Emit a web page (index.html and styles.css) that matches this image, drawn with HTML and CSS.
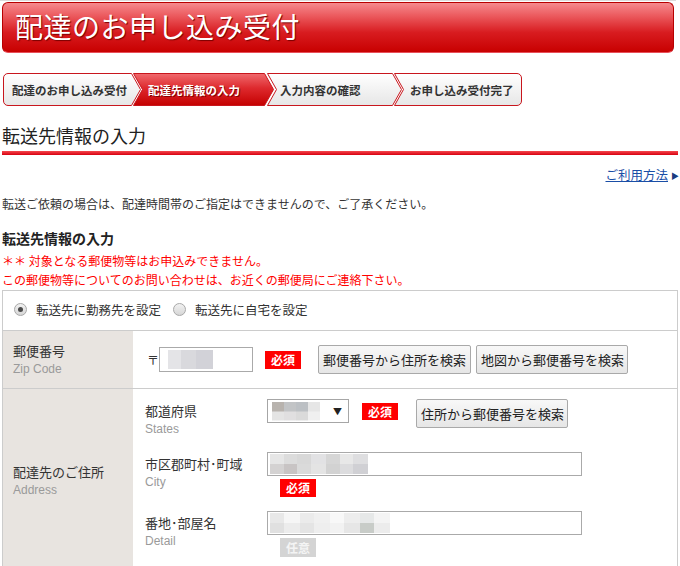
FILE: index.html
```html
<!DOCTYPE html>
<html lang="ja">
<head>
<meta charset="utf-8">
<title>配達のお申し込み受付</title>
<link rel="stylesheet" href="styles.css">
</head>
<body>
<div class="topline"></div>
<header class="hdr"><h1>配達のお申し込み受付</h1></header>

<ol class="steps">
  <li class="step s1">
    <svg width="138" height="33" viewBox="0 0 138 33"><defs><linearGradient id="gw1" x1="0" y1="0" x2="0" y2="1"><stop offset="0" stop-color="#ffffff"/><stop offset="1" stop-color="#e6e6e6"/></linearGradient></defs><path d="M5 .5H128.5L137.5 16.5L128.5 32.5H5A4.5 4.5 0 0 1 .5 28V5A4.5 4.5 0 0 1 5 .5Z" fill="url(#gw1)" stroke="#c8161d"/></svg>
    <span>配達のお申し込み受付</span>
  </li>
  <li class="step s2 active">
    <svg width="141" height="33" viewBox="0 0 141 33"><defs><linearGradient id="gr2" x1="0" y1="0" x2="0" y2="1"><stop offset="0" stop-color="#f06a6e"/><stop offset=".45" stop-color="#de2a2e"/><stop offset="1" stop-color="#c40000"/></linearGradient></defs><path d="M.5 .5H131.5L140.5 16.5L131.5 32.5H.5L9.5 16.5Z" fill="url(#gr2)" stroke="#c8161d"/></svg>
    <span>配達先情報の入力</span>
  </li>
  <li class="step s3">
    <svg width="135" height="33" viewBox="0 0 135 33"><defs><linearGradient id="gw3" x1="0" y1="0" x2="0" y2="1"><stop offset="0" stop-color="#ffffff"/><stop offset="1" stop-color="#e6e6e6"/></linearGradient></defs><path d="M.5 .5H125.5L134.5 16.5L125.5 32.5H.5L9.5 16.5Z" fill="url(#gw3)" stroke="#c8161d"/></svg>
    <span>入力内容の確認</span>
  </li>
  <li class="step s4">
    <svg width="128" height="33" viewBox="0 0 128 33"><defs><linearGradient id="gw4" x1="0" y1="0" x2="0" y2="1"><stop offset="0" stop-color="#ffffff"/><stop offset="1" stop-color="#e6e6e6"/></linearGradient></defs><path d="M.5 .5H123A4.5 4.5 0 0 1 127.5 5V28A4.5 4.5 0 0 1 123 32.5H.5L9.5 16.5Z" fill="url(#gw4)" stroke="#c8161d"/></svg>
    <span>お申し込み受付完了</span>
  </li>
</ol>

<h2 class="sec-title">転送先情報の入力</h2>
<div class="redline"></div>

<p class="help"><a href="#">ご利用方法</a><span class="tri">▶</span></p>

<p class="note">転送ご依頼の場合は、配達時間帯のご指定はできませんので、ご了承ください。</p>

<h3 class="sub-title">転送先情報の入力</h3>
<p class="warn">＊＊ 対象となる郵便物等はお申込みできません。<br>この郵便物等についてのお問い合わせは、お近くの郵便局にご連絡下さい。</p>

<div class="form">
  <div class="radios">
    <label class="opt"><span class="radio on"></span>転送先に勤務先を設定</label>
    <label class="opt"><span class="radio"></span>転送先に自宅を設定</label>
  </div>

  <div class="row">
    <div class="lbl"><div class="jp">郵便番号</div><div class="en">Zip Code</div></div>
    <div class="val zipval">
      <span class="postmark">〒</span>
      <span class="input zip"><span class="mosaic m-zip"></span></span>
      <span class="badge req">必須</span>
      <button class="btn b1" type="button">郵便番号から住所を検索</button>
      <button class="btn b2" type="button">地図から郵便番号を検索</button>
    </div>
  </div>

  <div class="row">
    <div class="lbl"><div class="jp">配達先のご住所</div><div class="en">Address</div></div>
    <div class="val subs">
      <div class="subrow">
        <div class="slbl"><div class="jp">都道府県</div><div class="en">States</div></div>
        <div class="field inline">
          <span class="select"><span class="mosaic m-sel"></span><span class="arrow">▼</span></span>
          <span class="badge req b-sel">必須</span>
          <button class="btn b3" type="button">住所から郵便番号を検索</button>
        </div>
      </div>
      <div class="subrow">
        <div class="slbl"><div class="jp">市区郡町村･町域</div><div class="en">City</div></div>
        <div class="field">
          <span class="input wide"><span class="mosaic m-city"></span></span>
          <span class="badge req under">必須</span>
        </div>
      </div>
      <div class="subrow">
        <div class="slbl"><div class="jp">番地･部屋名</div><div class="en">Detail</div></div>
        <div class="field">
          <span class="input wide"><span class="mosaic m-det"></span></span>
          <span class="badge opt-b under">任意</span>
        </div>
      </div>
    </div>
  </div>
</div>
</body>
</html>
```

FILE: styles.css
```css
* { box-sizing: border-box; }

body {
  margin: 0;
  width: 680px;
  background: #fff;
  color: #333;
  font-family: "Noto Sans CJK JP", sans-serif;
}

.topline {
  height: 1px;
  width: 676px;
  background: #dcdcdc;
}

.hdr {
  margin: 1px 0 0 2px;
  width: 672px;
  height: 51px;
  border: 1px solid #b80000;
  border-bottom-color: #e8505a;
  border-radius: 6px;
  background: linear-gradient(#f58a8e 0%, #ec5c60 25%, #d81c20 60%, #c80000 100%);
  display: flex;
  align-items: center;
  padding: 0 0 3px 12px;
}

.hdr h1 {
  margin: 0;
  font-size: 28px;
  font-weight: normal;
  line-height: 1;
  letter-spacing: 0.5px;
  color: #fff;
  text-shadow: 1px 1px 1px #7a0000;
}

.steps {
  list-style: none;
  margin: 20px 0 0;
  padding: 0;
  display: flex;
  height: 33px;
}

.step {
  position: relative;
  height: 33px;
  display: flex;
  align-items: center;
  font-size: 11.5px;
  font-weight: bold;
  color: #333;
  white-space: nowrap;
}

.step svg {
  position: absolute;
  left: 0;
  top: 0;
}

.step span { position: relative; }

.s1 { width: 138px; margin-left: 3px; padding-left: 9px; }
.s2 { width: 141px; margin-left: -8px; padding-left: 15px; }
.s3 { width: 135px; margin-left: -7px; padding-left: 13px; }
.s4 { width: 128px; margin-left: -8px; padding-left: 16px; }

.step.active {
  color: #fff;
  text-shadow: 1px 1px 0 #8a0000;
}

.sec-title {
  margin: 17px 0 4px 2px;
  font-size: 18px;
  line-height: 24px;
  font-weight: normal;
  color: #222;
}

.redline {
  margin-left: 2px;
  width: 676px;
  height: 4px;
  background: linear-gradient(#f4484e, #d80010);
}

.help {
  margin: 11px 1px 0 0;
  text-align: right;
  font-size: 12.5px;
  line-height: 18px;
}

.help a {
  color: #1a4ea6;
  text-decoration: underline;
}

.help .tri {
  margin-left: 3px;
  font-size: 8px;
  color: #1a3c80;
  vertical-align: 1px;
}

.note {
  margin: 10px 0 0 2px;
  font-size: 12px;
  line-height: 18px;
  color: #333;
}

.sub-title {
  margin: 15px 0 0 2px;
  font-size: 14px;
  line-height: 20px;
  font-weight: bold;
  color: #222;
}

.warn {
  margin: 3px 0 0 2px;
  font-size: 12px;
  line-height: 19px;
  color: #ff0000;
}

.form {
  margin: 1px 0 0 2px;
  width: 676px;
  border: 1px solid #cccccc;
  border-bottom: none;
}

.radios {
  height: 40px;
  border-bottom: 1px solid #cccccc;
  display: flex;
  align-items: center;
  padding: 0 0 2px 11px;
  font-size: 12.5px;
}

.opt {
  display: flex;
  align-items: center;
  gap: 9px;
  margin-right: 12px;
  color: #333;
}

.radio {
  width: 13px;
  height: 13px;
  border-radius: 50%;
  border: 1px solid #a8a8a8;
  background: linear-gradient(#f2f2f2, #d6d6d6);
  display: inline-flex;
  align-items: center;
  justify-content: center;
}

.radio.on::after {
  content: "";
  width: 5px;
  height: 5px;
  border-radius: 50%;
  background: #4a4a4a;
}

.row {
  display: flex;
  border-bottom: 1px solid #cccccc;
}

.lbl {
  width: 130px;
  flex: none;
  background: #e8e4e0;
  padding-left: 10px;
  display: flex;
  flex-direction: column;
  justify-content: center;
}

.jp {
  font-size: 13px;
  line-height: 20px;
  color: #333;
  white-space: nowrap;
}

.en {
  font-family: "Liberation Sans", Arial, sans-serif;
  font-size: 12px;
  line-height: 17px;
  color: #9a9a9a;
}

.val {
  flex: 1;
}

.zipval {
  min-height: 57px;
  display: flex;
  align-items: center;
  padding-left: 14px;
}

.postmark {
  width: 12px;
  font-size: 12px;
  color: #333;
}

.input {
  display: flex;
  align-items: center;
  height: 25px;
  border: 1px solid #aaaaaa;
  background: #fff;
}

.input.zip {
  width: 94px;
  margin-right: 12px;
}

.input.wide {
  width: 315px;
  height: 24px;
}

.badge {
  display: inline-block;
  width: 36px;
  height: 18px;
  line-height: 18px;
  text-align: center;
  font-size: 12px;
  font-weight: bold;
  color: #fff;
}

.badge.req { background: #ff0000; }

.badge.opt-b {
  background: #d4d4d4;
  color: #f4f4f4;
  height: 19px;
  line-height: 19px;
}

.btn {
  height: 29px;
  padding: 0 4px;
  border: 1px solid #a9a9a9;
  border-radius: 2px;
  background: linear-gradient(#f8f8f8, #e6e6e6);
  font-family: "Noto Sans CJK JP", sans-serif;
  font-size: 13px;
  color: #222;
  white-space: nowrap;
}

.b1 { width: 153px; margin-left: 17px; }
.b2 { width: 152px; margin-left: 5px; }
.b3 { width: 152px; margin-left: 18px; }

.subs {
  padding: 10px 0 14px 12px;
  display: flex;
  flex-direction: column;
  gap: 14px;
}

.subrow {
  display: grid;
  grid-template-columns: 122px 1fr;
}

.slbl { padding-top: 2px; }

.field {
  display: flex;
  flex-direction: column;
  align-items: flex-start;
}

.field.inline {
  flex-direction: row;
  align-items: flex-start;
}

.select {
  width: 82px;
  height: 24px;
  border: 1px solid #a6a6a6;
  background: #fff;
  display: flex;
  align-items: center;
  justify-content: space-between;
  padding: 0 6px 0 4px;
}

.arrow {
  font-size: 9px;
  color: #222;
}

.b-sel {
  margin-left: 13px;
  margin-top: 4px;
  height: 17px;
  line-height: 17px;
}

.under {
  margin: 3px 0 0 13px;
}

.mosaic {
  display: block;
  height: 19px;
}

.m-zip {
  width: 45px;
  margin-left: 8px;
  background: linear-gradient(90deg, #e4e4e7 0 30%, #d9d9dd 30% 62%, #d2d2d8 62% 100%);
}

.m-sel {
  width: 48px;
  background:
    linear-gradient(90deg, #b8b3ae 0 25%, #c2c4c6 25% 50%, #bcc0c4 50% 75%, #e6e6e6 75% 100%) top / 100% 50% no-repeat,
    linear-gradient(90deg, #e4e4e4 0 25%, #e0dfe0 25% 50%, #dadada 50% 75%, #f0f0f0 75% 100%) bottom / 100% 50% no-repeat;
}

.m-city {
  width: 98px;
  height: 20px;
  margin-left: 2px;
  background:
    linear-gradient(90deg, #e6e6e6 0 14%, #dcdcdc 14% 28%, #d8d8d8 28% 42%, #e2e2e4 42% 57%, #d6d6d6 57% 71%, #e8e8e8 71% 85%, #dedee0 85% 100%) top / 100% 50% no-repeat,
    linear-gradient(90deg, #d4d2d2 0 14%, #c8c4c4 14% 28%, #dadada 28% 42%, #e4e4e4 42% 57%, #d2d2d2 57% 71%, #dcdcde 71% 85%, #d0d0d4 85% 100%) bottom / 100% 50% no-repeat;
}

.m-det {
  width: 120px;
  height: 20px;
  margin-left: 2px;
  background:
    linear-gradient(90deg, #e8e8e8 0 12%, #f6f6f6 12% 25%, #ebebeb 25% 37%, #f0f0f0 37% 50%, #f8f8f8 50% 62%, #ededed 62% 75%, #e6e8e8 75% 87%, #f4f4f4 87% 100%) top / 100% 50% no-repeat,
    linear-gradient(90deg, #e0e0e0 0 12%, #ececec 12% 25%, #e4e4e4 25% 37%, #eeeeee 37% 50%, #f2f2f2 50% 62%, #e6e6e6 62% 75%, #c8ccc8 75% 87%, #ececec 87% 100%) bottom / 100% 50% no-repeat;
}
```
